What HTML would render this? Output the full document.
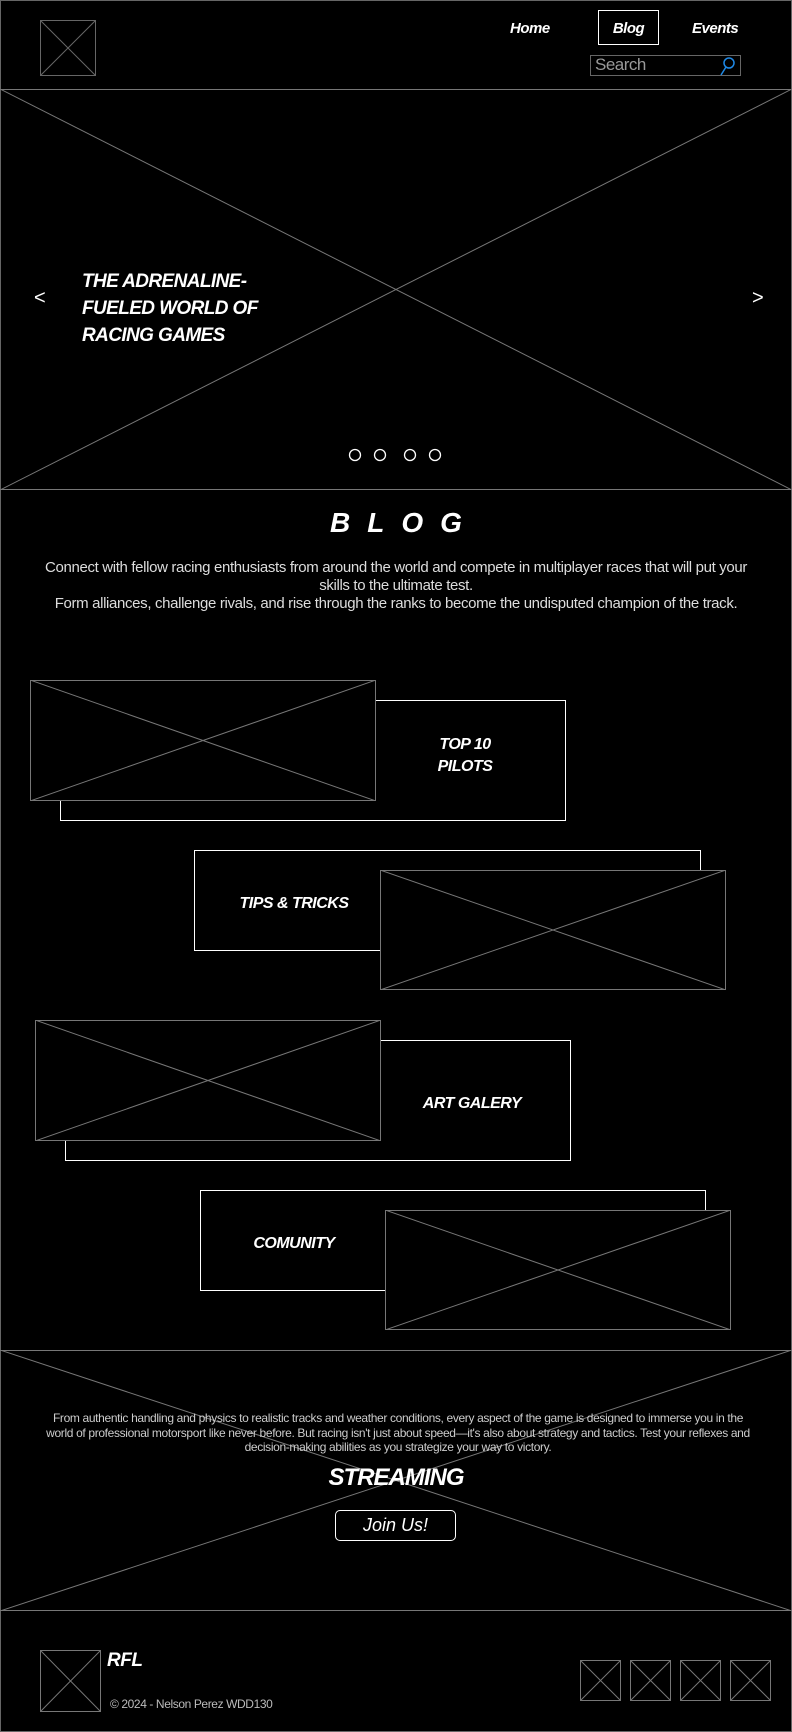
<!DOCTYPE html>
<html><head><meta charset="utf-8"><style>
*{margin:0;padding:0;box-sizing:border-box}
html,body{width:792px;height:1732px;background:#000;overflow:hidden}
body{position:relative;font-family:"Liberation Sans",sans-serif;color:#fff}
.a{position:absolute}
.x{position:absolute}
.x svg{display:block;width:100%;height:100%}
.h{font-family:"Liberation Sans",sans-serif;font-weight:bold;font-style:italic;color:#fff}
.box{position:absolute;border:1px solid #fff}
.c{text-align:center}
</style></head><body>
<div class="a" style="left:0;top:0;width:792px;height:1732px;border:1px solid #666"></div>

<!-- header -->
<div class="x" style="left:40px;top:20px;width:56px;height:56px"><svg viewBox="0 0 56 56" preserveAspectRatio="none"><rect x=".5" y=".5" width="55" height="55" fill="none" stroke="#666"/><path d="M0 0L56 56M56 0L0 56" stroke="#666"/></svg></div>
<div class="a h" style="left:510px;top:20px;font-size:15px;letter-spacing:-0.5px" >Home</div>
<div class="box" style="left:598px;top:10px;width:61px;height:35px"></div>
<div class="a h c" style="left:598px;top:20px;width:61px;font-size:15px;letter-spacing:-0.5px">Blog</div>
<div class="a h" style="left:692px;top:20px;font-size:15px;letter-spacing:-0.5px">Events</div>
<div class="a" style="left:590px;top:55px;width:151px;height:21px;border:1px solid #666"></div>
<div class="a" style="left:595px;top:55px;font-size:17px;color:#999;letter-spacing:-0.5px">Search</div>
<svg class="a" style="left:718px;top:56px" width="18" height="20" viewBox="0 0 18 20"><circle cx="11" cy="7" r="5" fill="none" stroke="#1e88e5" stroke-width="1.5"/><path d="M8 11L3 19" stroke="#1e88e5" stroke-width="1.5"/></svg>

<!-- hero -->
<div class="x" style="left:0;top:89px;width:792px;height:401px"><svg viewBox="0 0 792 401" preserveAspectRatio="none"><path d="M0 .5H792M0 400.5H792M0 0L792 401M792 0L0 401" stroke="#777" fill="none"/></svg></div>
<div class="a h" style="left:82px;top:268px;font-size:19px;line-height:27px;letter-spacing:-0.6px;width:190px">THE ADRENALINE-FUELED WORLD OF RACING GAMES</div>
<div class="a" style="left:34px;top:287px;font-size:20px">&lt;</div>
<div class="a" style="left:752px;top:287px;font-size:20px">&gt;</div>
<svg class="a" style="left:345px;top:447px" width="100" height="16"><g fill="none" stroke="#fff" stroke-width="1.3"><circle cx="10" cy="8" r="5.5"/><circle cx="35" cy="8" r="5.5"/><circle cx="65" cy="8" r="5.5"/><circle cx="90" cy="8" r="5.5"/></g></svg>

<!-- blog -->
<div class="a h c" style="left:0;top:507px;width:792px;font-size:28px;letter-spacing:17px;padding-left:17px">BLOG</div>
<div class="a c" style="left:28px;top:559px;width:736px;font-size:15px;line-height:18px;letter-spacing:-0.35px;color:#ddd">Connect with fellow racing enthusiasts from around the world and compete in multiplayer races that will put your skills to the ultimate test.<br>Form alliances, challenge rivals, and rise through the ranks to become the undisputed champion of the track.</div>

<div class="box" style="left:60px;top:700px;width:506px;height:121px"></div>
<div class="x" style="left:30px;top:680px;width:346px;height:121px;background:#000"><svg viewBox="0 0 346 121" preserveAspectRatio="none"><rect x=".5" y=".5" width="345" height="120" fill="none" stroke="#777"/><path d="M0 0L346 121M346 0L0 121" stroke="#777"/></svg></div>
<div class="a h c" style="left:415px;top:734px;width:100px;font-size:16px;line-height:22px;letter-spacing:-0.5px">TOP 10<br>PILOTS</div>

<div class="box" style="left:194px;top:850px;width:507px;height:101px"></div>
<div class="x" style="left:380px;top:870px;width:346px;height:120px;background:#000"><svg viewBox="0 0 346 120" preserveAspectRatio="none"><rect x=".5" y=".5" width="345" height="119" fill="none" stroke="#777"/><path d="M0 0L346 120M346 0L0 120" stroke="#777"/></svg></div>
<div class="a h c" style="left:214px;top:895px;width:160px;font-size:16px;letter-spacing:-0.5px">TIPS &amp; TRICKS</div>

<div class="box" style="left:65px;top:1040px;width:506px;height:121px"></div>
<div class="x" style="left:35px;top:1020px;width:346px;height:121px;background:#000"><svg viewBox="0 0 346 121" preserveAspectRatio="none"><rect x=".5" y=".5" width="345" height="120" fill="none" stroke="#777"/><path d="M0 0L346 121M346 0L0 121" stroke="#777"/></svg></div>
<div class="a h c" style="left:402px;top:1095px;width:140px;font-size:16px;letter-spacing:-0.5px">ART GALERY</div>

<div class="box" style="left:200px;top:1190px;width:506px;height:101px"></div>
<div class="x" style="left:385px;top:1210px;width:346px;height:120px;background:#000"><svg viewBox="0 0 346 120" preserveAspectRatio="none"><rect x=".5" y=".5" width="345" height="119" fill="none" stroke="#777"/><path d="M0 0L346 120M346 0L0 120" stroke="#777"/></svg></div>
<div class="a h c" style="left:224px;top:1235px;width:140px;font-size:16px;letter-spacing:-0.5px">COMUNITY</div>

<!-- streaming -->
<div class="x" style="left:0;top:1350px;width:792px;height:261px"><svg viewBox="0 0 792 261" preserveAspectRatio="none"><path d="M0 .5H792M0 260.5H792M0 0L792 261M792 0L0 261" stroke="#777" fill="none"/></svg></div>
<div class="a c" style="left:46px;top:1411px;width:704px;font-size:12px;line-height:14.5px;letter-spacing:-0.35px;color:#ccc">From authentic handling and physics to realistic tracks and weather conditions, every aspect of the game is designed to immerse you in the world of professional motorsport like never before. But racing isn't just about speed—it's also about strategy and tactics. Test your reflexes and decision-making abilities as you strategize your way to victory.</div>
<div class="a h c" style="left:0;top:1464px;width:792px;font-size:24px;letter-spacing:-1px">STREAMING</div>
<div class="a c" style="left:335px;top:1510px;width:121px;height:31px;border:1px solid #fff;border-radius:5px;font-style:italic;font-size:18px;line-height:28px">Join Us!</div>

<!-- footer -->
<div class="x" style="left:40px;top:1650px;width:61px;height:62px"><svg viewBox="0 0 61 62" preserveAspectRatio="none"><rect x=".5" y=".5" width="60" height="61" fill="none" stroke="#777"/><path d="M0 0L61 62M61 0L0 62" stroke="#777"/></svg></div>
<div class="a h" style="left:107px;top:1650px;font-size:19px;letter-spacing:-0.5px">RFL</div>
<div class="a" style="left:110px;top:1697px;font-size:12px;letter-spacing:-0.4px;color:#bbb">© 2024 - Nelson Perez WDD130</div>
<div class="x" style="left:580px;top:1660px;width:41px;height:41px"><svg viewBox="0 0 41 41"><rect x=".5" y=".5" width="40" height="40" fill="none" stroke="#777"/><path d="M0 0L41 41M41 0L0 41" stroke="#777"/></svg></div>
<div class="x" style="left:630px;top:1660px;width:41px;height:41px"><svg viewBox="0 0 41 41"><rect x=".5" y=".5" width="40" height="40" fill="none" stroke="#777"/><path d="M0 0L41 41M41 0L0 41" stroke="#777"/></svg></div>
<div class="x" style="left:680px;top:1660px;width:41px;height:41px"><svg viewBox="0 0 41 41"><rect x=".5" y=".5" width="40" height="40" fill="none" stroke="#777"/><path d="M0 0L41 41M41 0L0 41" stroke="#777"/></svg></div>
<div class="x" style="left:730px;top:1660px;width:41px;height:41px"><svg viewBox="0 0 41 41"><rect x=".5" y=".5" width="40" height="40" fill="none" stroke="#777"/><path d="M0 0L41 41M41 0L0 41" stroke="#777"/></svg></div>
</body></html>
